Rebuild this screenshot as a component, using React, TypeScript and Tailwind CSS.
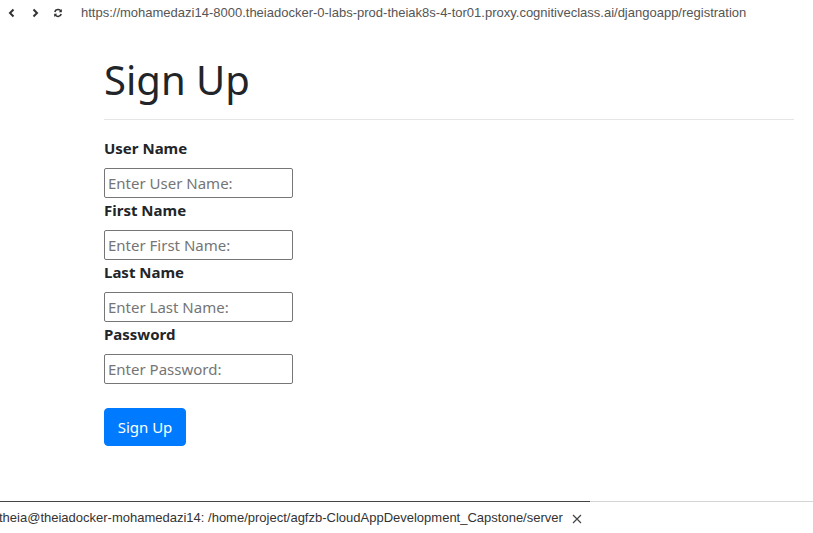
import React from 'react';

const fields = [
  { label: 'User Name', placeholder: 'Enter User Name:', type: 'text' },
  { label: 'First Name', placeholder: 'Enter First Name:', type: 'text' },
  { label: 'Last Name', placeholder: 'Enter Last Name:', type: 'text' },
  { label: 'Password', placeholder: 'Enter Password:', type: 'password' },
];

const Chevron = ({ dir }: { dir: 'left' | 'right' }) => (
  <svg width="10" height="10" viewBox="0 0 10 10" className="text-[#333]">
    <path
      d={dir === 'left' ? 'M6.5 1.5 L3 5 L6.5 8.5' : 'M3.5 1.5 L7 5 L3.5 8.5'}
      fill="none"
      stroke="currentColor"
      strokeWidth="2"
    />
  </svg>
);

const Refresh = () => (
  <svg width="10" height="10" viewBox="0 0 10 10" className="text-[#333]">
    <path d="M8 3.5 A3.3 3.3 0 0 0 1.8 4" fill="none" stroke="currentColor" strokeWidth="1.6" />
    <path d="M2 6.5 A3.3 3.3 0 0 0 8.2 6" fill="none" stroke="currentColor" strokeWidth="1.6" />
    <path d="M8.8 1 L8.8 4.2 L5.8 4.2 Z" fill="currentColor" />
    <path d="M1.2 9 L1.2 5.8 L4.2 5.8 Z" fill="currentColor" />
  </svg>
);

export default function App() {
  return (
    <div className="w-[813px] h-[533px] bg-white flex flex-col overflow-hidden">
      {/* Browser preview toolbar */}
      <div className="h-[25px] flex items-center pl-[7px] font-['Liberation_Sans',Arial,sans-serif] text-[13px] text-[#555]">
        <div className="flex items-center gap-[13px]">
          <Chevron dir="left" />
          <Chevron dir="right" />
          <Refresh />
        </div>
        <span className="ml-[18px]">
          https://mohamedazi14-8000.theiadocker-0-labs-prod-theiak8s-4-tor01.proxy.cognitiveclass.ai/djangoapp/registration
        </span>
      </div>

      {/* Page */}
      <div className="flex-1 pl-[104px] pr-[19px] pt-[31px] font-['Noto_Sans','Open_Sans',sans-serif] text-[#212529]">
        <h1 className="text-[40px] leading-[48px] font-normal">Sign Up</h1>
        <hr className="mt-[15px] mb-[16px] border-t border-[#e5e5e5]" />
        <form className="flex flex-col">
          {fields.map((f) => (
            <div key={f.label} className="flex flex-col items-start">
              <label className="text-[15px] leading-[24px] font-bold mb-[8px]">{f.label}</label>
              <input
                type={f.type}
                placeholder={f.placeholder}
                className="w-[189px] h-[30px] px-[3px] border border-[#767676] rounded-[2px] text-[15px] placeholder:text-[#757575] outline-none"
              />
            </div>
          ))}
          <div className="mt-[24px]">
            <button
              type="button"
              className="bg-[#007bff] text-white text-[15px] leading-[24px] px-[12px] py-[6px] h-[38px] w-[82px] rounded-[4px] border border-[#007bff]"
            >
              Sign Up
            </button>
          </div>
        </form>
      </div>

      {/* Terminal tab bar */}
      <div className="h-[32px] flex flex-col font-['Liberation_Sans',Arial,sans-serif]">
        <div className="flex h-[1px]">
          <div className="w-[590px] bg-[#444]" />
          <div className="flex-1 bg-[#d4d4d4]" />
        </div>
        <div className="flex-1 flex items-center text-[13px] text-[#333]">
          <span className="-ml-[1px]">theia@theiadocker-mohamedazi14: /home/project/agfzb-CloudAppDevelopment_Capstone/server</span>
          <svg width="10" height="10" viewBox="0 0 10 10" className="ml-[9px] mt-[2px] text-[#444]">
            <path d="M1 1 L9 9 M9 1 L1 9" stroke="currentColor" strokeWidth="1.2" />
          </svg>
        </div>
      </div>
    </div>
  );
}
